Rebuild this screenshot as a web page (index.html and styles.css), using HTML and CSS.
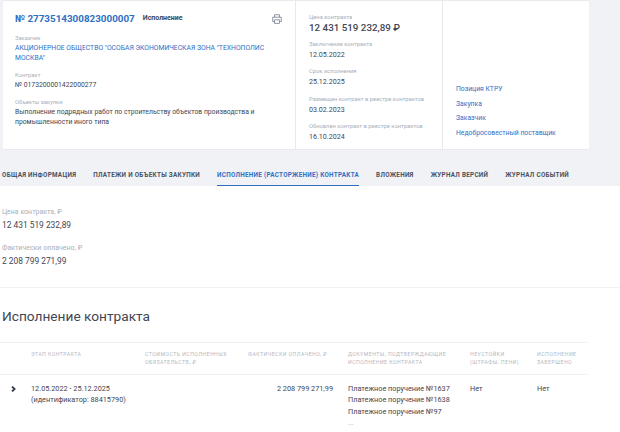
FILE: index.html
```html
<!DOCTYPE html>
<html lang="ru">
<head>
  <meta charset="UTF-8">
  <title>Контракт № 2773514300823000007</title>
  <link rel="stylesheet" href="styles.css">
</head>
<body>

  <div class="card">
    <div class="card-main">
      <div class="card-head">
        <a class="reg-number">№ 2773514300823000007</a>
        <span class="status">Исполнение</span>
        <svg class="print-icon" width="10" height="10" viewBox="0 0 10 10" fill="none" stroke="#8f96a3" stroke-width="1">
          <path d="M2.5 3.2V.7h5v2.5"/>
          <path d="M2.5 7.5H.7V3.2h8.6v4.3H7.5"/>
          <path d="M2.5 5.8h5v3.6h-5z"/>
        </svg>
      </div>
      <div class="field customer">
        <div class="label">Заказчик</div>
        <a class="link">АКЦИОНЕРНОЕ ОБЩЕСТВО "ОСОБАЯ ЭКОНОМИЧЕСКАЯ ЗОНА "ТЕХНОПОЛИС МОСКВА"</a>
      </div>
      <div class="field">
        <div class="label">Контракт</div>
        <div class="value">№ 0173200001422000277</div>
      </div>
      <div class="field">
        <div class="label">Объекты закупки</div>
        <div class="value">Выполнение подрядных работ по строительству объектов производства и промышленности иного типа</div>
      </div>
    </div>

    <div class="card-dates">
      <div class="label">Цена контракта</div>
      <div class="price">12 431 519 232,89 ₽</div>
      <div class="label">Заключение контракта</div>
      <div class="value">12.05.2022</div>
      <div class="label">Срок исполнения</div>
      <div class="value">25.12.2025</div>
      <div class="label">Размещен контракт в реестре контрактов</div>
      <div class="value">03.02.2023</div>
      <div class="label">Обновлен контракт в реестре контрактов</div>
      <div class="value">16.10.2024</div>
    </div>

    <div class="card-links">
      <a class="link">Позиция КТРУ</a>
      <a class="link">Закупка</a>
      <a class="link">Заказчик</a>
      <a class="link">Недобросовестный поставщик</a>
    </div>
  </div>

  <div class="tabs">
    <a class="tab">Общая информация</a>
    <a class="tab">Платежи и объекты закупки</a>
    <a class="tab active">Исполнение (расторжение) контракта</a>
    <a class="tab">Вложения</a>
    <a class="tab">Журнал версий</a>
    <a class="tab">Журнал событий</a>
  </div>

  <div class="content">
    <div class="summary">
      <div class="label">Цена контракта, ₽</div>
      <div class="sum">12 431 519 232,89</div>
      <div class="label">Фактически оплачено, ₽</div>
      <div class="sum">2 208 799 271,99</div>
    </div>

    <h2>Исполнение контракта</h2>

    <div class="stage-table">
      <div class="row head">
        <div></div>
        <div>Этап контракта</div>
        <div>Стоимость исполненных обязательств, ₽</div>
        <div>Фактически оплачено, ₽</div>
        <div>Документы, подтверждающие исполнение контракта</div>
        <div>Неустойки (штрафы, пени)</div>
        <div>Исполнение завершено</div>
      </div>
      <div class="row">
        <div>
          <svg class="chevron" width="5" height="6" viewBox="0 0 5 6" fill="none" stroke="#333a48" stroke-width="1.8">
            <path d="M1 .6 3.6 3 1 5.4"/>
          </svg>
        </div>
        <div>12.05.2022 - 25.12.2025<br>(идентификатор: 88415790)</div>
        <div></div>
        <div class="paid">2 208 799 271,99</div>
        <div>
          <div>Платежное поручение №1637</div>
          <div>Платежное поручение №1638</div>
          <div>Платежное поручение №97</div>
          <div class="more">...</div>
        </div>
        <div>Нет</div>
        <div>Нет</div>
      </div>
    </div>
  </div>

</body>
</html>
```

FILE: styles.css
```css
html,
body {
  height: 432px;
  overflow: hidden;
}

body {
  margin: 0;
  padding: 0;
  background-color: #f0f2f5;
  font-family: 'Roboto', sans-serif;
  font-size: 8px;
  color: #3f4654;
}

a {
  text-decoration: none;
}

.card {
  display: flex;
  width: 586px;
  height: 150px;
  margin-left: 3px;
  background-color: #fff;
  box-sizing: border-box;
  border-top: 1px solid #e8eaee;
  border-bottom: 1px solid #e8eaee;
}

.card-main {
  width: 293px;
  padding: 10px 13px 10px 12px;
  box-sizing: border-box;
  border-right: 1px solid #e8eaee;
}

.card-head {
  display: flex;
  align-items: flex-start;
  margin-bottom: 7px;
}

.reg-number {
  font-size: 9.85px;
  font-weight: 700;
  color: #2f6fc4;
  line-height: 16px;
}

.status {
  margin-left: 8px;
  font-size: 7px;
  font-weight: 700;
  line-height: 14px;
}

.print-icon {
  margin-left: auto;
  margin-top: 3px;
}

.label {
  font-size: 5.8px;
  line-height: 8px;
  color: #a9afbb;
}

.value {
  font-size: 6.8px;
  line-height: 10.4px;
  margin-top: .6px;
}

.link {
  display: block;
  font-size: 6.8px;
  line-height: 10.4px;
  color: #2f6fc4;
}

.field {
  margin-bottom: 8px;
}

.field .link {
  margin-top: .6px;
}

.card-dates {
  width: 147px;
  padding: 12px 13px;
  box-sizing: border-box;
  border-right: 1px solid #e8eaee;
}

.card-dates .value {
  font-size: 7.1px;
  line-height: 11px;
  margin-top: 1px;
  margin-bottom: 7.2px;
}

.price {
  font-size: 9.8px;
  font-weight: 500;
  line-height: 11px;
  margin-top: 1px;
  margin-bottom: 7.2px;
}

.card-links {
  display: flex;
  flex: 1;
  flex-direction: column;
  justify-content: flex-end;
  gap: 4px;
  padding: 0 13px 11px;
}

.tabs {
  display: flex;
  gap: 17px;
  height: 36px;
  padding-left: 2px;
  box-sizing: border-box;
}

.tab {
  font-size: 6.3px;
  font-weight: 700;
  letter-spacing: .3px;
  text-transform: uppercase;
  line-height: 10px;
  padding-top: 20px;
  color: #4a5160;
}

.tab.active {
  color: #2f6fc4;
  border-bottom: 1px solid #2f6fc4;
}

.content {
  height: 246px;
  background-color: #fff;
  box-sizing: border-box;
  padding-top: 22px;
}

.summary {
  padding: 0 2px;
  height: 79px;
  border-bottom: 1px solid #eff1f4;
}

.summary .label {
  font-size: 7px;
  line-height: 9px;
}

.sum {
  font-size: 8.4px;
  line-height: 12px;
  margin: 2px 0 13px;
}

h2 {
  margin: 0;
  padding: 19px 2px 17px;
  font-size: 13.7px;
  font-weight: 400;
  line-height: 18px;
}

.stage-table {
  width: 588px;
}

.row {
  display: grid;
  grid-template-columns: 31px 114px 103px 100px 122px 67px 51px;
  font-size: 7.3px;
  line-height: 11.3px;
  padding-top: 8px;
}

.row.head {
  height: 33px;
  padding-top: 6.5px;
  box-sizing: border-box;
  font-size: 5.2px;
  line-height: 8.5px;
  letter-spacing: .45px;
  text-transform: uppercase;
  color: #b4b9c4;
  border-top: 1px solid #eff1f4;
  border-bottom: 1px solid #eff1f4;
}

.row.head > div {
  padding-right: 8px;
}

.chevron {
  margin: 3px 0 0 11px;
}

.paid {
  text-align: right;
  padding-right: 15px;
}

.more {
  color: #a9afbb;
}
```
